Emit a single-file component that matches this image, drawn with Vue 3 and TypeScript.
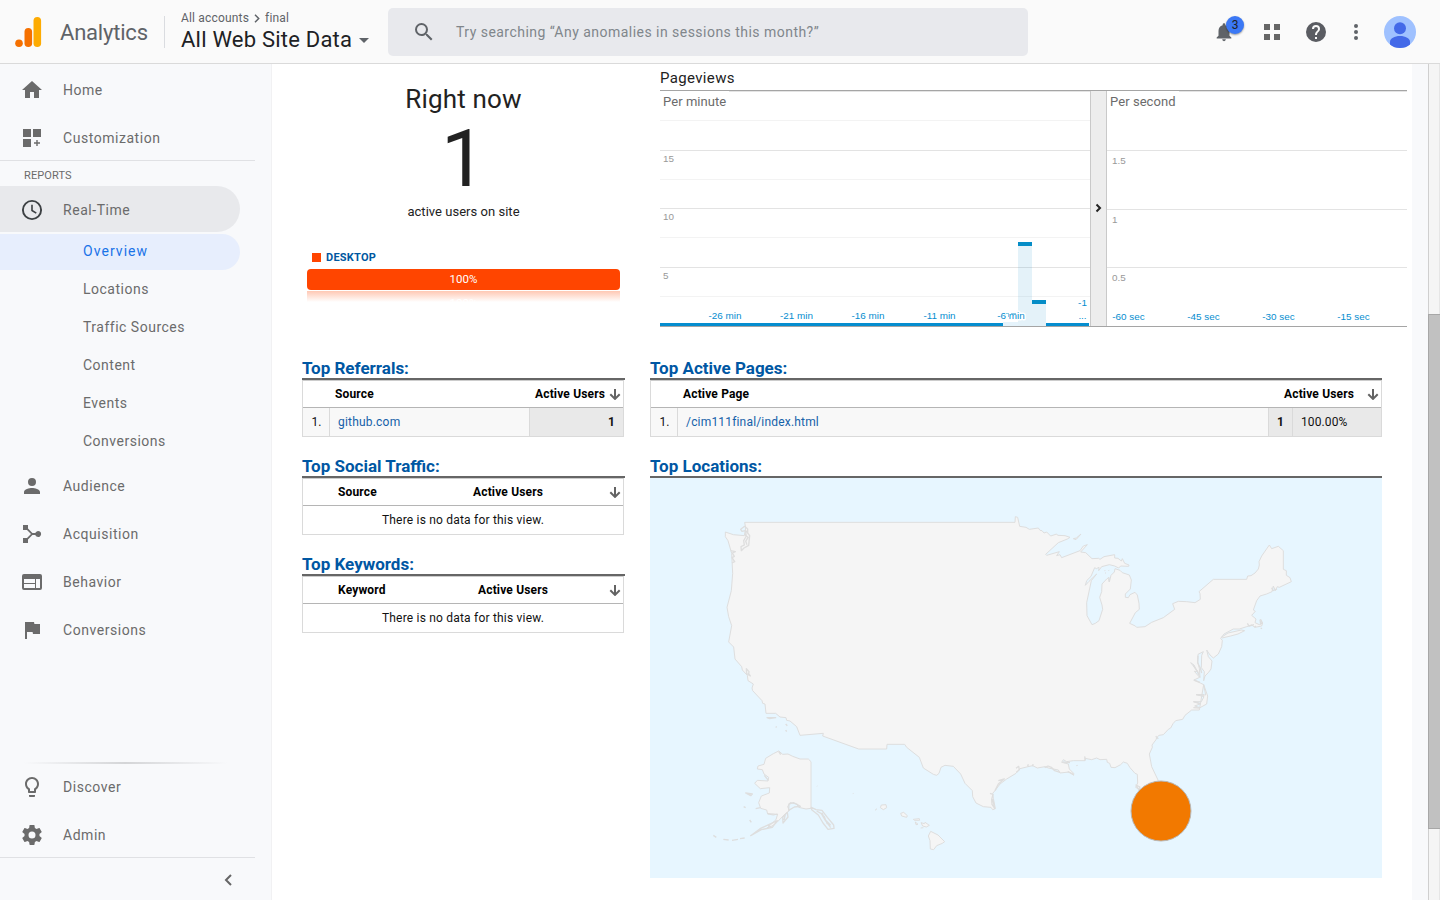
<script setup lang="ts">
interface NavItem { label: string; icon: string }

const top: NavItem[] = [
  { label: 'Home', icon: 'M10 20v-6h4v6h5v-8h3L12 3 2 12h3v8z' },
  { label: 'Customization', icon: 'M3 3h8v8H3zM13 3h8v8h-8zM3 13h8v8H3zM16.300 14h1.400v2.300H20v1.400h-2.300V20h-1.400v-2.300H14v-1.400h2.300z' },
]
const subItems: string[] = ['Overview', 'Locations', 'Traffic Sources', 'Content', 'Events', 'Conversions']
const reports: NavItem[] = [
  { label: 'Audience', icon: 'M12 12a4 4 0 1 0 0-8 4 4 0 0 0 0 8zm0 2c-2.67 0-8 1.34-8 4v2h16v-2c0-2.66-5.33-4-8-4z' },
  { label: 'Acquisition', icon: 'M3 3h5v3.600l4.400 4.400H15.300a3 3 0 1 1 0 2H12.400L8 17.400V21H3v-5h4l4-4-4-4H3z' },
  { label: 'Behavior', icon: 'M20 4H4a2 2 0 0 0-2 2v12a2 2 0 0 0 2 2h16a2 2 0 0 0 2-2V6a2 2 0 0 0-2-2zm-5 14H4v-4h11v4zm0-5H4V9h11v4zm5 5h-4V9h4v9z' },
  { label: 'Conversions', icon: 'M14.4 6L14 4H5v17h2v-7h5.6l.4 2h7V6z' },
]
const bottom: NavItem[] = [
  { label: 'Discover', icon: 'M9 21c0 .55.45 1 1 1h4c.55 0 1-.45 1-1v-1H9v1zm3-19C8.14 2 5 5.14 5 9c0 2.38 1.19 4.47 3 5.74V17c0 .55.45 1 1 1h6c.55 0 1-.45 1-1v-2.26c1.81-1.27 3-3.36 3-5.74 0-3.86-3.14-7-7-7zm2.85 11.1l-.85.6V16h-4v-2.3l-.85-.6C7.8 12.16 7 10.63 7 9c0-2.76 2.24-5 5-5s5 2.24 5 5c0 1.63-.8 3.16-2.15 4.1z' },
  { label: 'Admin', icon: 'M19.43 12.98c.04-.32.07-.64.07-.98s-.03-.66-.07-.98l2.11-1.65c.19-.15.24-.42.12-.64l-2-3.46c-.12-.22-.39-.3-.61-.22l-2.49 1c-.52-.4-1.08-.73-1.69-.98l-.38-2.65C14.46 2.18 14.25 2 14 2h-4c-.25 0-.46.18-.49.42l-.38 2.65c-.61.25-1.17.59-1.69.98l-2.49-1c-.23-.09-.49 0-.61.22l-2 3.46c-.13.22-.07.49.12.64l2.11 1.65c-.04.32-.07.65-.07.98s.03.66.07.98l-2.11 1.65c-.19.15-.24.42-.12.64l2 3.46c.12.22.39.3.61.22l2.49-1c.52.4 1.08.73 1.69.98l.38 2.65c.03.24.24.42.49.42h4c.25 0 .46-.18.49-.42l.38-2.65c.61-.25 1.17-.59 1.69-.98l2.49 1c.23.09.49 0 .61-.22l2-3.46c.12-.22.07-.49-.12-.64l-2.11-1.65zM12 15.5a3.5 3.5 0 1 1 0-7 3.5 3.5 0 0 1 0 7z' },
]

const majorLines: number[] = [60, 118, 177]
const minorLines: number[] = [30, 89, 147, 206]
const minuteScale = [{ y: 71.5, t: '15' }, { y: 129.5, t: '10' }, { y: 188.5, t: '5' }]
const secondLines: number[] = [60, 119, 177]
const secondScale = [{ y: 73.5, t: '1.5' }, { y: 132.5, t: '1' }, { y: 190.5, t: '0.5' }]
const minuteTicks = [{ x: 65, t: '-26 min' }, { x: 136.5, t: '-21 min' }, { x: 208, t: '-16 min' }, { x: 279.5, t: '-11 min' }]
const secondTicks = [{ x: 468.5, t: '-60 sec' }, { x: 543.5, t: '-45 sec' }, { x: 618.5, t: '-30 sec' }, { x: 693.5, t: '-15 sec' }]

const emptyTables = [
  { title: 'Top Social Traffic:', dim: 'Source', kind: 'social' },
  { title: 'Top Keywords:', dim: 'Keyword', kind: 'keywords' },
]
const arrow = 'M6 1v10M1.3 6.2L6 10.9l4.7-4.7'

const mainland = 'M134 67H945L946 50 953 52 959 79 978 82 988 88 1015 84 1020 91 1026 92 1032 99 1040 96 1052 108 1070 102 1073 106 1095 107 1110 112 1102 117 1075 128 1037 163 1040 166 1078 155 1070 167 1080 164 1085 173 1140 152 1150 138 1162 134 1142 156 1157 158 1176 176 1196 175 1200 178 1212 170 1244 164 1244 174 1254 175 1264 183 1267 176 1274 190 1287 195 1286 199 1262 198 1256 204 1244 198 1228 194 1205 200 1196 212 1197 202 1189 206 1184 203 1173 229 1160 242 1156 256 1167 244 1190 222 1174 242 1160 308 1161 347 1176 374 1186 370 1197 362 1208 328 1206 315 1199 292 1205 275 1206 252 1220 237 1227 232 1228 246 1233 226 1243 216 1245 206 1260 211 1267 218 1288 225 1294 240 1291 267 1276 282 1276 292 1285 293 1290 284 1305 277 1312 285 1317 310 1318 328 1306 338 1289 370 1306 378 1310 382 1335 380 1355 367 1390 353 1424 328 1418 311 1435 304 1460 305 1485 308 1501 298 1500 281 1497 275 1540 238H1640L1643 228 1653 227 1665 219 1675 207 1678 195 1677 185 1685 168 1708 135 1715 146 1735 139 1750 152V208L1759 212 1759 226 1770 233 1774 245 1738 262 1732 260 1726 272 1720 258 1716 275 1700 282 1680 288 1670 302 1660 330 1666 334 1655 346 1668 357 1665 368 1678 374 1686 370 1682 358 1688 369 1685 378 1665 382 1655 375 1640 380 1618 387 1600 387 1572 402 1562 415 1567 421 1565 440 1555 462 1540 474 1530 465 1520 450 1525 470 1536 483 1533 507 1525 518 1515 528 1511 542 1513 515 1504 503 1505 466 1510 455 1494 463 1493 485 1498 505 1500 532 1482 495 1472 488 1494 515 1483 514 1499 532 1482 540 1501 549 1511 554 1517 585 1489 584 1512 590 1504 605 1481 605 1503 611 1484 618 1500 623 1520 612 1523 588 1511 554M1504 620L1498 630 1475 630 1455 646 1448 658 1427 662 1419 671 1412 684 1405 688 1390 704 1377 706 1370 713 1368 719 1356 735 1357 742 1348 762 1355 800 1374 840 1380 880 1330 880 1312 865 1307 862 1313 849 1312 823 1305 820 1290 803 1282 790 1270 786 1262 794 1245 803 1233 802 1229 790 1222 787 1220 778 1200 779 1190 774 1175 779 1155 775 1155 782 1120 782 1100 785 1090 779 1085 787 1105 792 1108 807 1121 820 1121 826 1107 816 1080 819 1075 810 1045 804 1035 800 1012 804 998 797 984 800 960 806 948 820 920 837 900 852 885 872 878 880 880 895 886 926 878 929 873 922 850 920 828 909 818 890 817 872 795 850 782 822 760 799 735 796 723 802 717 820 710 826 700 823 670 804 658 772 620 742 614 733H561L560 747H476L368 708 370 700 300 706 290 680 270 663 260 661 258 653 240 651 227 640H198L195 612 188 610 186 602 158 572 156 564 160 552 144 542 142 526 127 510 125 500 105 477 101 441 86 426 95 377 86 350 81 322 94 272 98 220 95 160 84 122 76 110V96L100 104 133 107 137 84Z'
const mainlandClosed = mainland.replace('M1504 620L', 'L')
const alaska = 'M333 785V925L318 927 296 922 290 912 270 908 263 920 268 932 255 942 230 968 216 978 200 985 228 959 233 942 220 945 203 942 200 930 182 925 176 908 184 888 208 879 209 863 181 866 164 850 172 841 204 843 206 832 192 822 187 809 172 807 174 798 192 793 197 775 220 761 236 753 248 763 264 762 278 769 300 777 325 777Z'
</script>

<template>
  <div class="page">
    <header class="topbar">
      <svg class="logo" viewBox="0 0 28 32">
        <circle cx="4" cy="27.300" r="3.800" fill="#f57000" />
        <rect x="9.500" y="12" width="7.600" height="19" rx="3.800" fill="#f57000" />
        <rect x="18.500" y="1" width="7.600" height="30" rx="3.800" fill="#fdab02" />
      </svg>
      <span class="brand">Analytics</span>
      <div class="account">
        <div class="crumbs">All accounts
          <svg viewBox="0 0 6 9"><path d="M1 .8l3.700 3.700L1 8.200" fill="none" stroke="#5f6368" stroke-width="1.500" /></svg>
          final</div>
        <div class="view">All Web Site Data<i class="caret"></i></div>
      </div>
      <div class="search">
        <svg viewBox="0 0 24 24"><path fill="#5f6368" d="M15.500 14h-.79l-.28-.27A6.470 6.470 0 0 0 16 9.500 6.500 6.500 0 1 0 9.500 16c1.610 0 3.090-.59 4.230-1.570l.27.28v.79l5 4.990L20.490 19l-4.990-5zm-6 0a4.500 4.500 0 1 1 0-9 4.500 4.500 0 0 1 0 9z" /></svg>
        <span>Try searching “Any anomalies in sessions this month?”</span>
      </div>
      <div class="tools">
        <div class="bell">
          <svg viewBox="0 0 24 24"><path fill="#5f6368" d="M12 22c1.100 0 2-.9 2-2h-4a2 2 0 0 0 2 2zm6-6v-5c0-3.070-1.640-5.640-4.500-6.320V4a1.500 1.500 0 0 0-3 0v.68C7.630 5.360 6 7.920 6 11v5l-2 2v1h16v-1z" /></svg>
          <b>3</b>
        </div>
        <svg class="apps" viewBox="0 0 16 16"><path fill="#666" d="M0 0h6v6H0zM10 0h6v6h-6zM0 10h6v6H0zM10 10h6v6h-6z" /></svg>
        <svg class="help" viewBox="0 0 24 24"><path fill="#5a5c62" d="M12 2a10 10 0 1 0 0 20 10 10 0 0 0 0-20zm1 17h-2v-2h2v2zm2.070-7.750l-.9.920C13.450 12.900 13 13.500 13 15h-2v-.5c0-1.100.45-2.100 1.170-2.830l1.240-1.260c.37-.36.59-.86.59-1.410a2 2 0 0 0-4 0H8a4 4 0 0 1 8 0c0 .88-.36 1.680-.93 2.250z" /></svg>
        <svg class="dots" viewBox="0 0 4 16"><g fill="#5f6368"><circle cx="2" cy="2" r="2" /><circle cx="2" cy="8" r="2" /><circle cx="2" cy="14" r="2" /></g></svg>
        <svg class="avatar" viewBox="0 0 32 32"><circle cx="16" cy="16" r="16" fill="#9fc1ff" /><circle cx="16" cy="12.200" r="6" fill="#4369e8" /><path fill="#4369e8" d="M6 25.500c0-3 4.500-5.500 10-5.500s10 2.500 10 5.500v2.900C23.400 30.700 20 32 16 32S8.600 30.700 6 28.400z" /></svg>
      </div>
    </header>

    <div class="body">
      <nav class="side">
        <div class="group first">
          <a v-for="n in top" :key="n.label" class="item"><svg viewBox="0 0 24 24"><path :d="n.icon" /></svg>{{ n.label }}</a>
        </div>
        <div class="caption">REPORTS</div>
        <a class="item current"><svg viewBox="0 0 24 24"><circle cx="12" cy="12" r="9.100" fill="none" stroke="#3c4043" stroke-width="1.900" /><path d="M12 6.700v5.800l4.300 2.600" fill="none" stroke="#3c4043" stroke-width="1.600" /></svg>Real-Time</a>
        <div class="subs">
          <a v-for="(s, i) in subItems" :key="s" :class="{ on: i === 0 }">{{ s }}</a>
        </div>
        <div class="group">
          <a v-for="n in reports" :key="n.label" class="item"><svg viewBox="0 0 24 24"><path :d="n.icon" /></svg>{{ n.label }}</a>
        </div>
        <div class="foot">
          <div class="fade"></div>
          <a v-for="n in bottom" :key="n.label" class="item"><svg viewBox="0 0 24 24"><path :d="n.icon" /></svg>{{ n.label }}</a>
          <div class="collapse"><svg viewBox="0 0 8 12"><path d="M7 1L2 6l5 5" fill="none" stroke="#666" stroke-width="2" /></svg></div>
        </div>
      </nav>

      <main class="content">
        <section class="overview">
          <div class="now">
            <div class="now-title">Right now</div>
            <div class="now-count">1</div>
            <div class="now-sub">active users on site</div>
            <div class="legend"><i></i>DESKTOP</div>
            <div class="bar">100%</div>
            <div class="mirror"><span>100%</span></div>
          </div>
          <div class="views">
            <h2>Pageviews</h2>
            <svg class="chart" viewBox="0 0 747 237" shape-rendering="crispEdges">
              <rect v-for="y in minorLines" :key="'n' + y" x="0" :y="y" width="430" height="1" fill="#f3f3f3" />
              <rect v-for="y in majorLines" :key="'m' + y" x="0" :y="y" width="430" height="1" fill="#e3e3e3" />
              <rect v-for="y in secondLines" :key="'s' + y" x="447" :y="y" width="300" height="1" fill="#e3e3e3" />
              <rect x="0" y="0" width="747" height="1" fill="#a5a5a5" />
              <path d="M69 1.500H430M519 1.500H747" stroke="#e4e4e4" />
              <rect x="430" y="1" width="17" height="235" fill="#ededed" />
              <path d="M430.500 1V236M446.500 1V236" stroke="#c9c9c9" />
              <rect x="343" y="232" width="15" height="4" fill="#e5f3fb" />
              <rect x="358" y="154" width="14" height="82" fill="#058dc7" fill-opacity=".11" />
              <rect x="372" y="213" width="14" height="23" fill="#058dc7" fill-opacity=".11" />
              <rect x="358" y="152" width="14" height="4" fill="#058dc7" />
              <rect x="372" y="210" width="14" height="4" fill="#058dc7" />
              <path d="M0 234.500H343M386 234.500H429" stroke="#058dcf" stroke-width="3" />
              <rect x="0" y="236" width="747" height="1" fill="#a5a5a5" />
              <path d="M436.500 114.500l3.500 3.500-3.500 3.500" fill="none" stroke="#222" stroke-width="2" shape-rendering="auto" />
              <g class="panel-name"><text x="3" y="16">Per minute</text><text x="450" y="16">Per second</text></g>
              <g class="scale">
                <text v-for="s in minuteScale" :key="s.t" x="3" :y="s.y">{{ s.t }}</text>
                <text v-for="s in secondScale" :key="s.t" x="452" :y="s.y">{{ s.t }}</text>
              </g>
              <g class="ticks">
                <text v-for="t in minuteTicks" :key="t.t" :x="t.x" y="229">{{ t.t }}</text>
                <text x="351" y="229" class="halo">-6 min</text>
                <path d="M346 223.500h2.500v3M351 223.500h5" stroke="#8ecbe6" fill="none" />
                <text v-for="t in secondTicks" :key="t.t" :x="t.x" y="230">{{ t.t }}</text>
                <text x="422.500" y="216">-1</text><text x="422.500" y="229">...</text>
              </g>
            </svg>
          </div>
        </section>

        <section class="reports">
          <div class="col-left">
            <div class="card">
              <h3>Top Referrals:</h3>
              <div class="table refer">
                <div class="thead"><b>Source</b><b>Active Users</b><svg viewBox="0 0 12 12"><path :d="arrow" /></svg></div>
                <div class="row"><span class="idx">1.</span><span class="link">github.com</span><span class="num">1</span></div>
              </div>
            </div>
            <div v-for="t in emptyTables" :key="t.title" class="card">
              <h3>{{ t.title }}</h3>
              <div class="table" :class="t.kind">
                <div class="thead"><b>{{ t.dim }}</b><b>Active Users</b><svg viewBox="0 0 12 12"><path :d="arrow" /></svg></div>
                <div class="row none">There is no data for this view.</div>
              </div>
            </div>
          </div>
          <div class="col-right">
            <div class="card">
              <h3>Top Active Pages:</h3>
              <div class="table pages">
                <div class="thead"><b>Active Page</b><b>Active Users</b><svg viewBox="0 0 12 12"><path :d="arrow" /></svg></div>
                <div class="row"><span class="idx">1.</span><span class="link">/cim111final/index.html</span><span class="num">1</span><span class="pct">100.00%</span></div>
              </div>
            </div>
            <div class="card">
              <h3>Top Locations:</h3>
              <svg class="map" viewBox="-150 -66 2196 1200">
                <g fill="#f5f5f5" stroke="#dedede" stroke-width="3" stroke-linejoin="round">
                  <path :d="mainlandClosed" />
                  <path :d="alaska" />
                  <path d="M1120 116l9-2 14-12-15 17z" />
                  <path d="M1564 412l20-13 40-9 10 2-20 10-22 6-26 6z" />
                  <path d="M692 994l22 11 20 20-7 5-17 7-9 12-10-2-1-25-5-14zM544 915l14-1 2 9-10 6-9-6zM602 940l9-3 11 10-2 5-15-4zM663 968l10 3 2-4 13 9-9 5-11-3zM640 958l18-2 1 5h-16zM646 966l8 7-6 1zM525 931l6-5M662 984l8-1" />
                </g>
                <g fill="none" stroke="#dedede" stroke-width="4" stroke-linejoin="round">
                  <path d="M122 88l12-9 9 8v12l6 8-3 29-14 8-8 8-1-12 10-5-2-13 8-14-3-16-10 2zM140 92l-4 14 8 6-7 12 4 10M92 152l14 3-9 4 6 10-7 4 8 12-8 4M139 506l8 9-1 6 5 7-11-7zM201 653h26l-18 3zM227 680l3 2M257 672l5 5M257 690l3 5" />
                  <path d="M334 922l14 7 18 2 16 21 19 23 1 10-18 3-15-19-14-24-20-16zM350 933l14 8 12 20 16 22M366 938l8 20 18 18M372 948l10 24M267 912l13-4 11 5 10 6-18 2-17 10zM262 937l2 14-15 18-1-17zM256 944l-4 16M232 962l-15 20-33 7-32 18 30-22zM205 976l8 6M137 879l20 3-5 5zM131 920l6 3M149 960l5 7M40 1006l9 6M70 1018l16 2M96 1021l18-3M120 1016l14-2M203 941l28 2M181 923l-14 3M193 826l12 15M236 754l6 10M351 858l1 1M459 880l1 1" />
                  <path d="M885 872l10-20 18-15-18 5M870 880l9 3-4 15 1 15 8 12-6-28M948 805l8-6 2 10-9 8M983 799l2-6M998 799l1-7M1034 803l10-5 10 4 10 10 16 5M1088 786l22 2M1103 815l18 8M1130 795l2 3M1154 769l2 12M1308 855l12 6-4 8zM1226 235l2 11M1214 211l1 2M1215 219h2M1226 210l1 2M1480 496l18 28M1481 540l19 7M1494 467l-1 22 8 15 4 15M1488 584l24 1M1480 605l20 6M1480 623l20 1M1642 370l5 8 15-4M1663 382l5-4M1680 359l2 15M1682 384l4 2M1715 263l4 9 12-5M1367 709l8 7" />
                </g>
                <circle cx="1383" cy="933" r="90" fill="#f27900" stroke="#b8b8b8" stroke-width="3" />
              </svg>
            </div>
          </div>
        </section>
      </main>
      <div class="track"><div class="thumb"></div></div>
    </div>
  </div>
</template>

<style>
body { overflow: hidden; }
</style>

<style scoped>
* { box-sizing: border-box; }
svg { display: block; flex: none; }
.page { width: 1440px; height: 900px; background: #f8f9fb; font-family: Roboto, "Noto Sans", sans-serif; color: #222; display: flex; flex-direction: column; overflow: hidden; }
.topbar { height: 64px; flex: none; background: #fafafa; border-bottom: 1px solid #dadada; display: flex; align-items: flex-start; }
.logo { width: 28px; height: 32px; margin: 16px 17px 0 15px; }
.brand { width: 105px; height: 32px; margin-top: 16px; border-right: 1px solid #dadce0; font-size: 22px; line-height: 33px; color: #5f6368; letter-spacing: -.2px; }
.account { width: 223px; padding: 10px 0 0 16px; white-space: nowrap; }
.crumbs { height: 16px; display: flex; align-items: center; font-size: 12px; line-height: 16px; color: #5f6368; letter-spacing: .18px; }
.crumbs svg { width: 6px; height: 9px; margin: 0 5px; }
.view { display: flex; align-items: center; font-size: 22px; line-height: 28px; color: #202124; letter-spacing: .22px; }
.caret { border: 5px solid transparent; border-top-color: #5f6368; border-bottom: 0; margin-left: 7px; }
.search { width: 640px; height: 48px; margin-top: 8px; background: #e8e9ed; border-radius: 5px; display: flex; align-items: center; padding-left: 24px; color: #80868b; font-size: 14px; letter-spacing: .47px; }
.search svg { width: 24px; height: 24px; margin-right: 20px; }
.tools { flex: 1; height: 64px; display: flex; align-items: center; justify-content: flex-end; padding-right: 24px; }
.bell { position: relative; margin-right: 29px; }
.bell svg { width: 22px; height: 22px; }
.bell b { position: absolute; left: 13px; top: -5px; width: 18px; height: 18px; border-radius: 50%; background: #3b78f5; box-shadow: 0 1px 2px #0006; font-size: 12px; font-weight: 400; line-height: 18px; text-align: center; color: #202124; }
.apps { width: 16px; height: 16px; margin-right: 24px; }
.help { width: 24px; height: 24px; margin-right: 26px; }
.dots { width: 4px; height: 16px; margin-right: 26px; }
.avatar { width: 32px; height: 32px; }
.body { flex: 1; display: flex; min-height: 0; }
.side { width: 272px; border-right: 1px solid #f1f1f3; display: flex; flex-direction: column; }
.group { display: flex; flex-direction: column; width: 255px; }
.group.first { padding-top: 2px; height: 97px; border-bottom: 1px solid #e0e1e4; }
.item { height: 48px; flex: none; padding-left: 20px; display: flex; align-items: center; color: #6b6b6b; font-size: 14px; font-weight: 450; letter-spacing: .54px; }
.item svg { width: 24px; height: 24px; margin-right: 19px; fill: #6b6b6b; }
.caption { height: 25px; padding: 2px 0 0 24px; font-size: 11px; line-height: 25px; font-weight: 450; color: #6b6b6b; letter-spacing: .1px; }
.current { width: 240px; height: 46px; background: #e8e9ec; border-radius: 0 23px 23px 0; padding-top: 2px; }
.subs { padding-top: 2px; display: flex; flex-direction: column; gap: 2px; margin-bottom: 2px; }
.subs a { width: 240px; height: 36px; line-height: 35px; padding-left: 83px; font-size: 14px; font-weight: 450; color: #6b6b6b; letter-spacing: .5px; }
.subs .on { background: #e7eefd; border-radius: 0 18px 18px 0; color: #1a73e8; letter-spacing: 1.050px; }
.foot { margin-top: auto; width: 255px; }
.fade { height: 2px; margin: 0 28px 0 24px; background: linear-gradient(90deg, transparent, #d4d5d7 50%, transparent); margin-bottom: -1px; }
.collapse { height: 43px; margin-top: -2px; border-top: 1px solid #e0e1e4; padding: 16px 0 0 224px; }
.collapse svg { width: 8px; height: 12px; }
.content { width: 1140px; background: #fff; }
.overview { display: flex; height: 290px; padding-left: 30px; }
.now { width: 358px; padding: 19px 40px 0 5px; text-align: center; white-space: nowrap; flex: none; }
.now-title { font-size: 26px; line-height: 32px; letter-spacing: .15px; }
.now-count { font-size: 80px; line-height: 88px; height: 88px; }
.now-sub { font-size: 13px; line-height: 18px; letter-spacing: .03px; }
.legend { display: flex; align-items: center; margin: 28px 0 4px 5px; height: 16px; font-size: 11px; font-weight: 700; color: #0057a0; letter-spacing: .25px; }
.legend i { width: 9px; height: 9px; margin-right: 5px; background: #ff4500; }
.bar { width: 313px; height: 21px; border-radius: 4px; background: #ff4500; color: #fff; font-size: 11.500px; line-height: 21px; }
.mirror { width: 313px; height: 11px; margin-top: 1px; background: linear-gradient(#ffc8b4, #fff); color: #fff; }
.mirror span { display: block; padding-top: 6px; font-size: 11.500px; line-height: 12px; }
.views { width: 747px; }
.views h2 { margin: 0; height: 26px; font-size: 15px; line-height: 28px; font-weight: 400; letter-spacing: .35px; }
.chart { width: 747px; height: 237px; }
.panel-name text { font-size: 13px; fill: #6b6b6b; letter-spacing: .06px; }
.scale text, .ticks text { font-family: "Liberation Sans", Arial, sans-serif; font-size: 9.900px; }
.scale text { fill: #999; }
.ticks text { fill: #058dcf; text-anchor: middle; }
.ticks .halo { paint-order: stroke; stroke: #fff; stroke-width: 3px; stroke-linejoin: round; }
.reports { display: flex; padding-left: 30px; gap: 25px; }
.col-left { width: 323px; }
.col-right { width: 732px; }
.card { margin-bottom: 15px; }
.card h3 { margin: 0; height: 26px; border-bottom: 2px solid #666; font-size: 17px; line-height: 29px; font-weight: 700; color: #0057a3; white-space: nowrap; }
.table { border: 1px solid #dadada; border-top-color: #ccc; width: 322px; height: 57px; font-size: 12px; color: #111; letter-spacing: .1px; }
.pages { width: 732px; }
.thead { height: 27px; border-bottom: 1px solid #b5b5b5; display: flex; align-items: center; padding-right: 2px; letter-spacing: .16px; }
.thead b { font-weight: 700; color: #000; white-space: nowrap; }
.thead svg { width: 12px; height: 12px; margin-left: auto; }
.thead path { fill: none; stroke: #636363; stroke-width: 2; }
.thead b:first-child { width: 200px; padding-left: 32px; }
.social .thead b:first-child { width: 170px; padding-left: 35px; }
.keywords .thead b:first-child { width: 175px; padding-left: 35px; }
.refer .thead b:first-child { width: 232px; }
.pages .thead b:first-child { width: 633px; }
.row { height: 28px; display: flex; line-height: 28px; background: #f8f8f8; }
.row.none { background: #fff; justify-content: center; letter-spacing: .2px; }
.idx { width: 27px; border-right: 1px solid #dadada; text-align: center; padding-left: 1px; }
.link { flex: 1; padding-left: 8px; color: #1561a9; letter-spacing: .2px; }
.num { width: 94px; border-left: 1px solid #dadada; padding-right: 8px; background: #e9e9e9; text-align: right; font-weight: 700; }
.pages .num { width: 24px; padding-right: 8px; }
.pages .link { letter-spacing: .18px; }
.pct { width: 89px; background: #e9e9e9; border-left: 1px solid #dadada; padding-left: 8px; }
.map { width: 732px; height: 400px; background: #e7f6ff; }
.track { width: 12px; margin-left: 16px; background: #f5f5f5; border-left: 1px solid #cfcfcf; border-right: 1px solid #e6e6e6; padding-top: 250px; }
.thumb { height: 515px; margin-left: -1px; margin-right: -1px; background: #c1c1c1; border: 1px solid #a7a7a7; border-right: 0; }
</style>
